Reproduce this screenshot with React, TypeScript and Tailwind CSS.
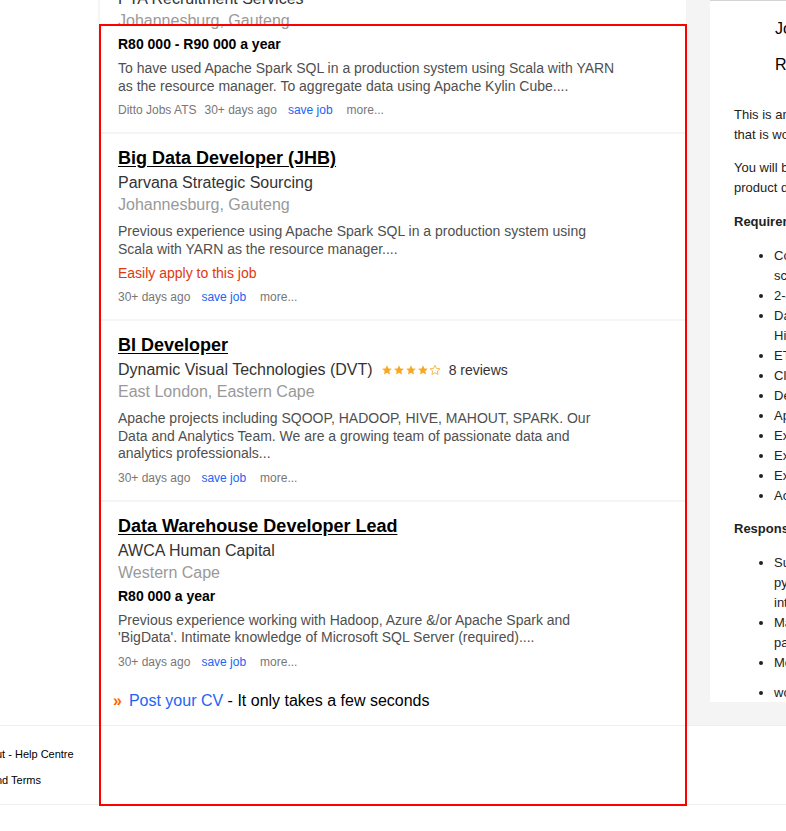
import { Fragment } from 'react';

type Job = {
    title: string;
    company: string;
    location: string;
    salary?: string;
    snippet: string;
    source?: string;
    easyApply?: boolean;
    rating?: { stars: number; reviews: string };
};

const JOBS: Job[] = [
    {
        title: 'Big Data Engineer',
        company: 'PTA Recruitment Services',
        location: 'Johannesburg, Gauteng',
        salary: 'R80 000 - R90 000 a year',
        snippet:
            'To have used Apache Spark SQL in a production system using Scala with YARN as the resource manager. To aggregate data using Apache Kylin Cube....',
        source: 'Ditto Jobs ATS',
    },
    {
        title: 'Big Data Developer (JHB)',
        company: 'Parvana Strategic Sourcing',
        location: 'Johannesburg, Gauteng',
        snippet:
            'Previous experience using Apache Spark SQL in a production system using Scala with YARN as the resource manager....',
        easyApply: true,
    },
    {
        title: 'BI Developer',
        company: 'Dynamic Visual Technologies (DVT)',
        location: 'East London, Eastern Cape',
        snippet:
            'Apache projects including SQOOP, HADOOP, HIVE, MAHOUT, SPARK. Our Data and Analytics Team. We are a growing team of passionate data and analytics professionals...',
        rating: { stars: 4, reviews: '8 reviews' },
    },
    {
        title: 'Data Warehouse Developer Lead',
        company: 'AWCA Human Capital',
        location: 'Western Cape',
        salary: 'R80 000 a year',
        snippet:
            "Previous experience working with Hadoop, Azure &/or Apache Spark and 'BigData'. Intimate knowledge of Microsoft SQL Server (required)....",
    },
];

function Star({ filled }: { filled: boolean }) {
    return (
        <svg viewBox="0 0 24 24" className="w-[12px] h-[12px]">
            <path
                d="M12 2.5l2.9 6.3 6.9.7-5.2 4.6 1.5 6.8L12 17.4l-6.1 3.5 1.5-6.8-5.2-4.6 6.9-.7z"
                fill={filled ? '#f7a823' : 'none'}
                stroke="#f7a823"
                strokeWidth={filled ? 0 : 1.6}
                strokeLinejoin="round"
            />
        </svg>
    );
}

function JobRow({ job, first }: { job: Job; first: boolean }) {
    return (
        <div className={first ? 'pt-[13px] pb-[13px] pl-[18px]' : 'pt-[13px] pb-[13px] pl-[18px] border-t-2 border-[#f5f5f5]'}>
            <h2 className="text-[18px] leading-[22px] font-bold text-black underline underline-offset-2 mb-[3px]">
                {job.title}
            </h2>
            <div className="flex items-center text-[16px] leading-[22px] text-[#333]">
                <span>{job.company}</span>
                {job.rating && (
                    <span className="flex items-center ml-[8px]">
                        {[0, 1, 2, 3, 4].map((i) => (
                            <Star key={i} filled={i < job.rating!.stars} />
                        ))}
                        <span className="ml-[8px] text-[14px] text-[#333]">{job.rating.reviews}</span>
                    </span>
                )}
            </div>
            <div className="text-[16px] leading-[22px] text-[#999]">{job.location}</div>
            {job.salary && (
                <div className="mt-[3px] text-[14px] leading-[18px] font-bold text-black">{job.salary}</div>
            )}
            <p className="mt-[7px] max-w-[505px] text-[14px] leading-[17.5px] text-[#4f4f4f]">{job.snippet}</p>
            {job.easyApply && (
                <div className="mt-[6px] text-[14px] leading-[18px] text-[#e0380f]">Easily apply to this job</div>
            )}
            <div className="mt-[6px] flex text-[12px] leading-[18px] text-[#777]">
                {job.source && <span className="mr-[8px]">{job.source}</span>}
                <span>30+ days ago</span>
                <span className="ml-[11px] text-[#2164f3]">save job</span>
                <span className="ml-[14px]">more...</span>
            </div>
        </div>
    );
}

const REQUIREMENTS = [
    ['Computer Science, Engineering or related', 'science degree'],
    ['2-4 years experience in a similar role'],
    ['Data modelling and warehousing, Spark,', 'Hive and Hadoop'],
    ['ETL design and development'],
    ['Cloud platforms such as AWS or Azure'],
    ['Devops tooling and CI/CD pipelines'],
    ['Apache Kylin and OLAP cubes'],
    ['Experience with Scala'],
    ['Experience with SQL'],
    ['Experience with YARN'],
    ['Accuracy and attention to detail'],
];

const RESPONSIBILITIES = [
    ['Support the team with data extraction using', 'python and Spark, and build new', 'integrations with source systems'],
    ['Maintain and optimise the Hadoop cluster', 'particularly the Spark jobs'],
    ['Mentor junior team members'],
];

function Lines({ lines }: { lines: string[] }) {
    return (
        <>
            {lines.map((l, i) => (
                <Fragment key={i}>
                    {i > 0 && <br />}
                    {l}
                </Fragment>
            ))}
        </>
    );
}

export default function App() {
    return (
        <div className="relative w-full h-[831px] overflow-hidden bg-white font-['Liberation_Sans',Arial,sans-serif] whitespace-nowrap">
            <div className="flex h-[725px]">
                <div className="w-[98px] flex-none" />

                {/* Results column */}
                <main className="w-[588px] flex-none border-l-2 border-[#f5f5f5] overflow-hidden whitespace-normal">
                    <div className="-mt-[50px]">
                        {JOBS.map((job, i) => (
                            <JobRow key={job.title} job={job} first={i === 0} />
                        ))}
                        <div className="-mt-[13px] pt-[19px] pl-[13px] flex items-baseline text-[16px] leading-[22px]">
                            <span className="font-bold text-[#ff6600] mr-[7px]">»</span>
                            <span className="text-[#2164f3]">Post your CV</span>
                            <span className="text-black">&nbsp;- It only takes a few seconds</span>
                        </div>
                    </div>
                </main>

                {/* Job detail panel */}
                <aside className="w-[480px] flex-none bg-[#f4f4f4]">
                    <div className="ml-[24px] w-[420px] h-[702px] overflow-hidden bg-white border-t border-[#d4d4d4] pl-[24px] text-[13px] leading-[20px] text-[#222]">
                        <div className="pl-[41px] pt-[18px] text-[16px] leading-[20px] text-black">
                            <div>Johannesburg, Gauteng</div>
                            <div className="mt-[16px]">R80 000 - R90 000 a year</div>
                        </div>
                        <p className="mt-[30px]">
                            This is an exciting opportunity to join a team
                            <br />
                            that is working on a high volume data platform.
                        </p>
                        <p className="mt-[13px]">
                            You will be part of a small team responsible for
                            <br />
                            product development and data engineering.
                        </p>
                        <p className="mt-[14px] font-bold">Requirements</p>
                        <ul className="mt-[14px] list-disc pl-10">
                            {REQUIREMENTS.map((r, i) => (
                                <li key={i}>
                                    <Lines lines={r} />
                                </li>
                            ))}
                        </ul>
                        <p className="mt-[13px] font-bold">Responsibilities</p>
                        <ul className="mt-[14px] list-disc pl-10">
                            {RESPONSIBILITIES.map((r, i) => (
                                <li key={i}>
                                    <Lines lines={r} />
                                </li>
                            ))}
                        </ul>
                        <ul className="mt-[10px] list-disc pl-10">
                            <li>work closely with the analytics team</li>
                        </ul>
                    </div>
                </aside>
            </div>

            {/* Footer */}
            <footer className="border-t border-b border-[#efefef] pt-[20px] pb-[16px] text-[11px] leading-[16px] text-black">
                <div className="-ml-[4px]">ut - Help Centre</div>
                <div className="-ml-[4px] mt-[10px]">nd Terms</div>
            </footer>

            {/* highlight box */}
            <div className="absolute left-[99px] top-[24px] w-[588px] h-[782px] border-2 border-[#ff0000] pointer-events-none" />
        </div>
    );
}
